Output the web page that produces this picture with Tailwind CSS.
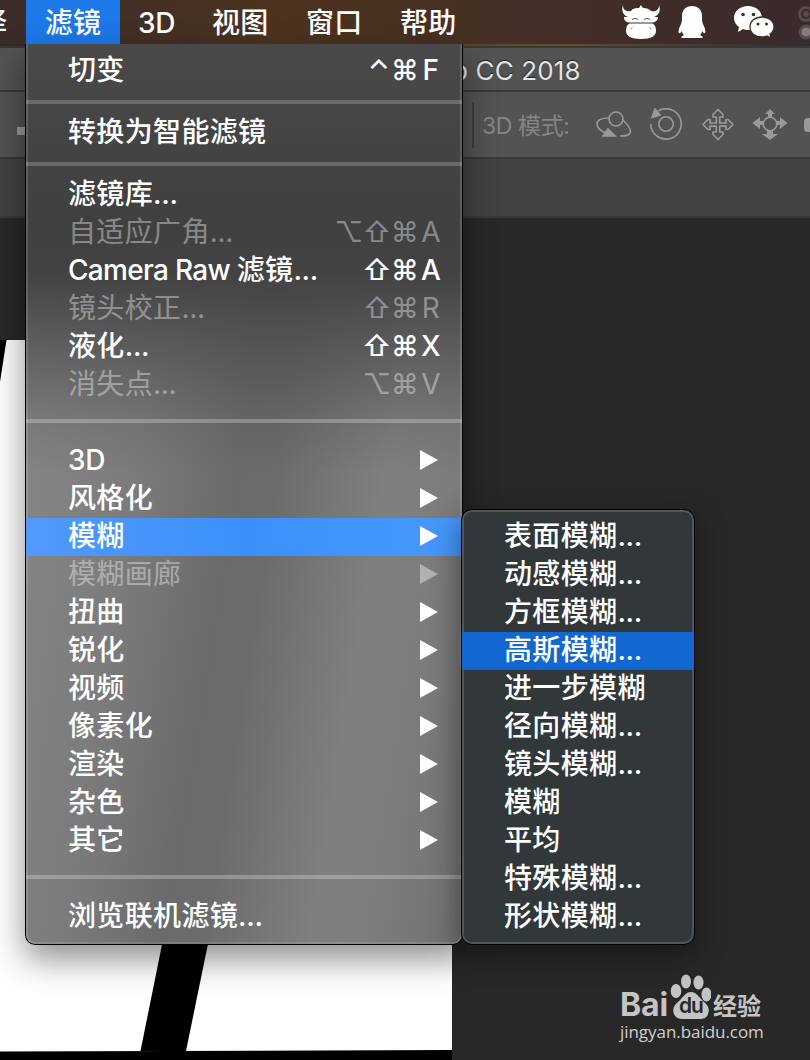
<!DOCTYPE html>
<html lang="zh-CN">
<head>
  <meta charset="UTF-8" />
  <title>Photoshop – 滤镜</title>
  <meta name="viewport" content="width=device-width, initial-scale=1" />
  <script src="https://cdn.jsdelivr.net/npm/@tailwindcss/browser@4"></script>
</head>
<body class="overflow-hidden bg-[#282828]">
<div class="relative w-[810px] h-[1060px] overflow-hidden flex flex-col font-['Inter','Noto_Sans_CJK_SC',sans-serif] text-[28px] text-white">

  <!-- MENU BAR -->
  <nav class="h-[44px] shrink-0 flex items-center font-medium tracking-[0.3px] bg-linear-to-r from-[#3a2c2a] via-[#4c331e] via-35% to-[#392a2c]">
    <span class="-ml-[21px] w-[47px] shrink-0 pt-[2px]">择</span>
    <span class="w-[94px] h-full pt-[2px] flex items-center justify-center bg-[#1d78e8]">滤镜</span>
    <span class="w-[73px] pt-[2px] pl-[18px] tracking-[-0.3px]">3D</span>
    <span class="w-[94px] pt-[2px] pl-[19px]">视图</span>
    <span class="w-[94px] pt-[2px] pl-[19px]">窗口</span>
    <span class="w-[94px] pt-[2px] pl-[19px]">帮助</span>
    <div class="ml-auto flex items-center">
      <!-- cow -->
      <svg class="w-[38px] h-[36px]" viewBox="0 0 38 36" fill="#fff">
        <path d="M1 1C1 6 4 8 9 7C11 4 14 4 17 4L19 1L21 4C25 4 27 5 29 7C34 8 37 6 37 1C39 7 37 11 32 13L36 13C36 17 33 18 31 18.500H7C4 18 2 17 2 13L6 13C1 11-1 7 1 1Z"/>
        <path d="M8 19.500H30C33 20 34 24 34 27C34 32 29 35 19 35C9 35 4 32 4 27C4 24 5 20 8 19.500Z"/>
        <path d="M10 15.500q3-2.500 6 0M22 15.500q3-2.500 6 0" fill="none" stroke="#6a5048" stroke-width="1"/>
        <path d="M9 26q0-3 2-3M29 26q0-3-2-3" fill="none" stroke="#c9a690" stroke-width="1"/>
      </svg>
      <!-- penguin -->
      <svg class="ml-[18px] w-[28px] h-[34px]" viewBox="0 0 28 34" fill="#fff">
        <path d="M14 1C20 1 24 5 24 11C24 15 24 17 25 19C27 23 28 27 27 28C26 29 25 27 24 26C24 28 23 29 22 30L25 32Q25 33 23 33H5Q3 33 3 32L6 30C5 29 4 28 4 26C3 27 2 29 1 28C0 27 1 23 3 19C4 17 4 15 4 11C4 5 8 1 14 1Z"/>
      </svg>
      <!-- wechat -->
      <svg class="ml-[27px] w-[42px] h-[34px]" viewBox="0 0 42 34">
        <path d="M15 1C7 1 1 6 1 13C1 17 3 20 6 22L5 27L10 24C12 25 15 25 17 25C25 25 29 20 29 13C29 6 23 1 15 1Z" fill="#fff"/>
        <path d="M29 12C22 12 17 16 17 22C17 28 22 32 29 32C31 32 33 32 34 31L38 33L37 29C40 27 41 25 41 22C41 16 36 12 29 12Z" fill="#fff" stroke="#3f2d29" stroke-width="1.3"/>
        <g fill="#3f2d29"><circle cx="10" cy="9.500" r="1.800"/><circle cx="20.500" cy="9.500" r="1.800"/><circle cx="25" cy="19" r="1.500"/><circle cx="33.500" cy="19" r="1.500"/></g>
      </svg>
      <svg class="ml-[21px] w-[14px] h-[36px]" viewBox="0 0 14 36" fill="none" stroke="#594b4b" stroke-width="3">
        <circle cx="10" cy="10" r="6.500"/><circle cx="10" cy="10" r="1.500"/><circle cx="10" cy="28" r="6" fill="#857b7b"/>
      </svg>
    </div>
  </nav>
  <div class="h-[2px] shrink-0 bg-linear-to-r from-[#352a24] via-[#6b4a26] via-70% to-[#332a2c]"></div>

  <!-- TITLE BAR -->
  <header class="h-[46px] shrink-0 flex items-center border-y-2 border-[#383838] bg-[#535353] pl-[452px] pt-[3px] text-[26px] text-[#e4e4e4] text-shadow-[0_-1px_1px_#222] whitespace-pre"><span class="tracking-[0.15px]">p CC 2018</span></header>

  <!-- OPTIONS BAR -->
  <section class="relative h-[67px] shrink-0 flex items-center border-b-2 border-[#383838] bg-[#535353]">
    <span class="ml-[17px] mt-3 w-[9px] h-2 bg-[#999]"></span>
    <span class="ml-[446px] w-[2px] h-[46px] bg-[#3d3d3d]"></span>
    <span class="ml-[8px] w-[114px] pt-[4px] text-[23px] text-[#858585] whitespace-nowrap tracking-[-0.4px]">3D 模式:</span>
    <svg class="w-[36px] h-[34px]" viewBox="0 0 36 34" fill="none" stroke="#999" stroke-width="1.6">
      <circle cx="20" cy="11" r="7"/><path d="M13 10C6 10 1 12 1 16C1 19 4 23 10 25M27 12C32 17 36 22 34 25C33 28 29 28 24 28"/><path d="M12 21L7 28H19Z" fill="#999"/>
    </svg>
    <svg class="ml-[17px] w-[34px] h-[34px]" viewBox="0 0 34 34" fill="none" stroke="#999" stroke-width="1.6">
      <circle cx="17" cy="16" r="7.200"/><path d="M9 3A15.200 15.200 0 1 1 1.800 16"/><path d="M6 1L3 9.500L11 7Z" fill="#999"/>
    </svg>
    <svg class="ml-[18px] w-[34px] h-[34px]" viewBox="0 0 34 34" fill="none" stroke="#999" stroke-width="1.700" stroke-linejoin="round">
      <path d="M17 1.500L22 6.500V9H18.700V15H25V11.500H27L32 16.500L27 21.500H25V18.200H18.700V24H22V26.500L17 31.500L12 26.500V24H15.300V18.200H9V21.500H7L2 16.500L7 11.500H9V15H15.300V9H12V6.500Z"/>
    </svg>
    <svg class="ml-[17px] w-[36px] h-[34px]" viewBox="0 0 36 34" fill="#999">
      <path d="M18 1L23 6H20V10H16V6H13ZM.5 15L8 9V13H12V17H8V21ZM35.500 15L28 9V13H24V17H28V21ZM15 23H21V26H26L18 32L10 26H15Z"/>
      <circle cx="18" cy="16" r="6.800" fill="#535353" stroke="#999" stroke-width="1.600"/>
    </svg>
    <span class="ml-auto w-[6px] h-[14px] rounded-l-sm bg-[#999]"></span>
  </section>
  <div class="h-[59px] shrink-0 border-b-2 border-[#383838] bg-[#424242]"></div>

  <!-- CANVAS -->
  <main class="mt-[122px] w-[452px] h-[720px] shrink-0">
    <svg class="w-full h-full" viewBox="0 0 452 720">
      <rect width="452" height="720" fill="#fff"/>
      <path d="M0 0H6.500L0 42Z"/>
      <path d="M171 560H217L186 711H140.500Z"/>
      <path d="M0 711.500L452 710V720H0Z"/>
    </svg>
  </main>

  <!-- WATERMARK -->
  <div class="absolute left-[620px] top-[973px] w-[148px] text-[#c4c4c4]">
    <div class="flex items-end h-[47px]">
      <span class="-mb-[1px] w-[49px] text-[32px] leading-[32px] font-bold tracking-[-0.1px]">Bai</span>
      <div class="relative w-[42px] h-[47px]">
        <svg class="w-full h-full" viewBox="0 0 42 47" fill="#c4c4c4">
          <ellipse cx="7" cy="18" rx="5.300" ry="7"/><ellipse cx="17" cy="8.500" rx="5" ry="7"/><ellipse cx="29.500" cy="9.500" rx="5" ry="7"/><ellipse cx="37.500" cy="21.500" rx="5" ry="7"/>
          <path d="M22 19C27 19 30 24 34 28C39 32 41 36 39 41C37 47 32 46 22 46C12 46 8 47 5 41C3 36 5 32 10 28C14 24 17 19 22 19Z"/>
        </svg>
        <span class="absolute left-[10px] top-[22px] text-[21px] leading-[22px] font-semibold text-[#282828] tracking-[-1px]">du</span>
      </div>
      <span class="ml-[2px] text-[24px] leading-[26px] font-bold">经验</span>
    </div>
    <p class="pt-[1px] font-['Open_Sans',sans-serif] text-[17px] leading-[21px] font-medium tracking-[-0.05px] text-[#d0d0d0]">jingyan.baidu.com</p>
  </div>

  <!-- FILTER MENU -->
  <div id="filterMenu" class="absolute left-[25px] top-[44px] w-[438px] h-[901px] pt-2 rounded-b-[10px] border-x border-b border-black font-medium tracking-[0.35px] bg-[linear-gradient(180deg,#494949_0px,#404040_180px,#434343_230px,rgba(67,67,67,0.65)_290px,rgba(67,67,67,0.2)_370px,transparent_430px),linear-gradient(99deg,#858585_10%,#7c7c7c_30%,#6b6b6b_48%,#6c6c6c_55%,#7f7f7f_74%,#7d7d7d_84%,#707070_100%)] shadow-[inset_2px_0_0_rgba(255,255,255,0.15),inset_-2px_0_0_rgba(255,255,255,0.15),inset_0_-2px_0_rgba(255,255,255,0.12),0_14px_34px_rgba(0,0,0,0.45)]"></div>

  <!-- BLUR SUBMENU -->
  <div id="blurMenu" class="absolute left-[461px] top-[509px] w-[234px] h-[436px] pt-[8px] rounded-[11px] border border-black shadow-[0_10px_30px_rgba(0,0,0,0.45)] font-medium tracking-[0.35px] bg-[#32383a] inset-ring-2 inset-ring-white/15"></div>
</div>

<script>
  const filterItems = [
    { label: '切变', keys: '⌃⌘F' },
    { sep: 'small' },
    { label: '转换为智能滤镜' },
    { sep: 'small' },
    { label: '滤镜库...' },
    { label: '自适应广角...', keys: '⌥⇧⌘A', disabled: true },
    { label: 'Camera Raw 滤镜...', keys: '⇧⌘A' },
    { label: '镜头校正...', keys: '⇧⌘R', disabled: true },
    { label: '液化...', keys: '⇧⌘X' },
    { label: '消失点...', keys: '⌥⌘V', disabled: true },
    { sep: 'large' },
    { label: '3D', sub: true },
    { label: '风格化', sub: true },
    { label: '模糊', sub: true, active: true },
    { label: '模糊画廊', sub: true, disabled: true },
    { label: '扭曲', sub: true },
    { label: '锐化', sub: true },
    { label: '视频', sub: true },
    { label: '像素化', sub: true },
    { label: '渲染', sub: true },
    { label: '杂色', sub: true },
    { label: '其它', sub: true },
    { sep: 'large' },
    { label: '浏览联机滤镜...' }
  ];

  const blurItems = ['表面模糊...', '动感模糊...', '方框模糊...', '高斯模糊...', '进一步模糊', '径向模糊...', '镜头模糊...', '模糊', '平均', '特殊模糊...', '形状模糊...'];

  const arrow = '<svg class="mr-[24px] mb-[1px] w-[18px] h-[20px]" viewBox="0 0 18 20" fill="currentColor"><path d="M0 0L18 10L0 20Z"/></svg>';

  // latin runs are set tighter than the chinese text
  function tighten(label) {
    return label.replace(/[\x20-\x7e]+/g, run =>
      `<span class="${/[a-z]/.test(run) ? 'tracking-[-0.7px]' : 'tracking-[-0.3px]'}">${run}</span>`);
  }

  function keyCap(k) {
    if (/[A-Z]/.test(k)) return `<span class="w-[24px] flex justify-center">${k}</span>`;
    if (k === '⌃') return `<span class="w-[24px] flex justify-center">${k}</span>`;
    return `<span class="w-[28px] flex justify-center">${k}</span>`;
  }

  function createItem(item) {
    if (item.sep === 'small') return '<div class="my-[10px] h-1 bg-white/20"></div>';
    if (item.sep === 'large') return '<div class="mt-[15px] mb-[19px] h-1 bg-white/25"></div>';
    const tone = item.disabled ? 'text-white/40 font-normal' : 'text-white';
    const bg = item.active ? 'bg-linear-to-r from-[#5299fa] via-[#3a90fa] to-[#4798fb]' : '';
    return `
      <div class="h-[38px] pl-[42px] pb-[1px] flex items-center justify-between leading-[37px] whitespace-nowrap ${tone} ${bg}">
        <span>${tighten(item.label)}</span>
        ${item.keys ? `<span class="flex mr-[19px] pb-[1px] leading-[36px]">${[...item.keys].map(keyCap).join('')}</span>` : ''}
        ${item.sub ? arrow : ''}
      </div>`;
  }

  document.getElementById('filterMenu').innerHTML = filterItems.map(createItem).join('');
  document.getElementById('blurMenu').innerHTML = blurItems.map((label, i) => `
    <div class="h-[38px] pl-[42px] leading-[37px] whitespace-nowrap ${i === 3 ? 'bg-[#1268d0]' : ''}">${tighten(label)}</div>`).join('');
</script>
</body>
</html>
